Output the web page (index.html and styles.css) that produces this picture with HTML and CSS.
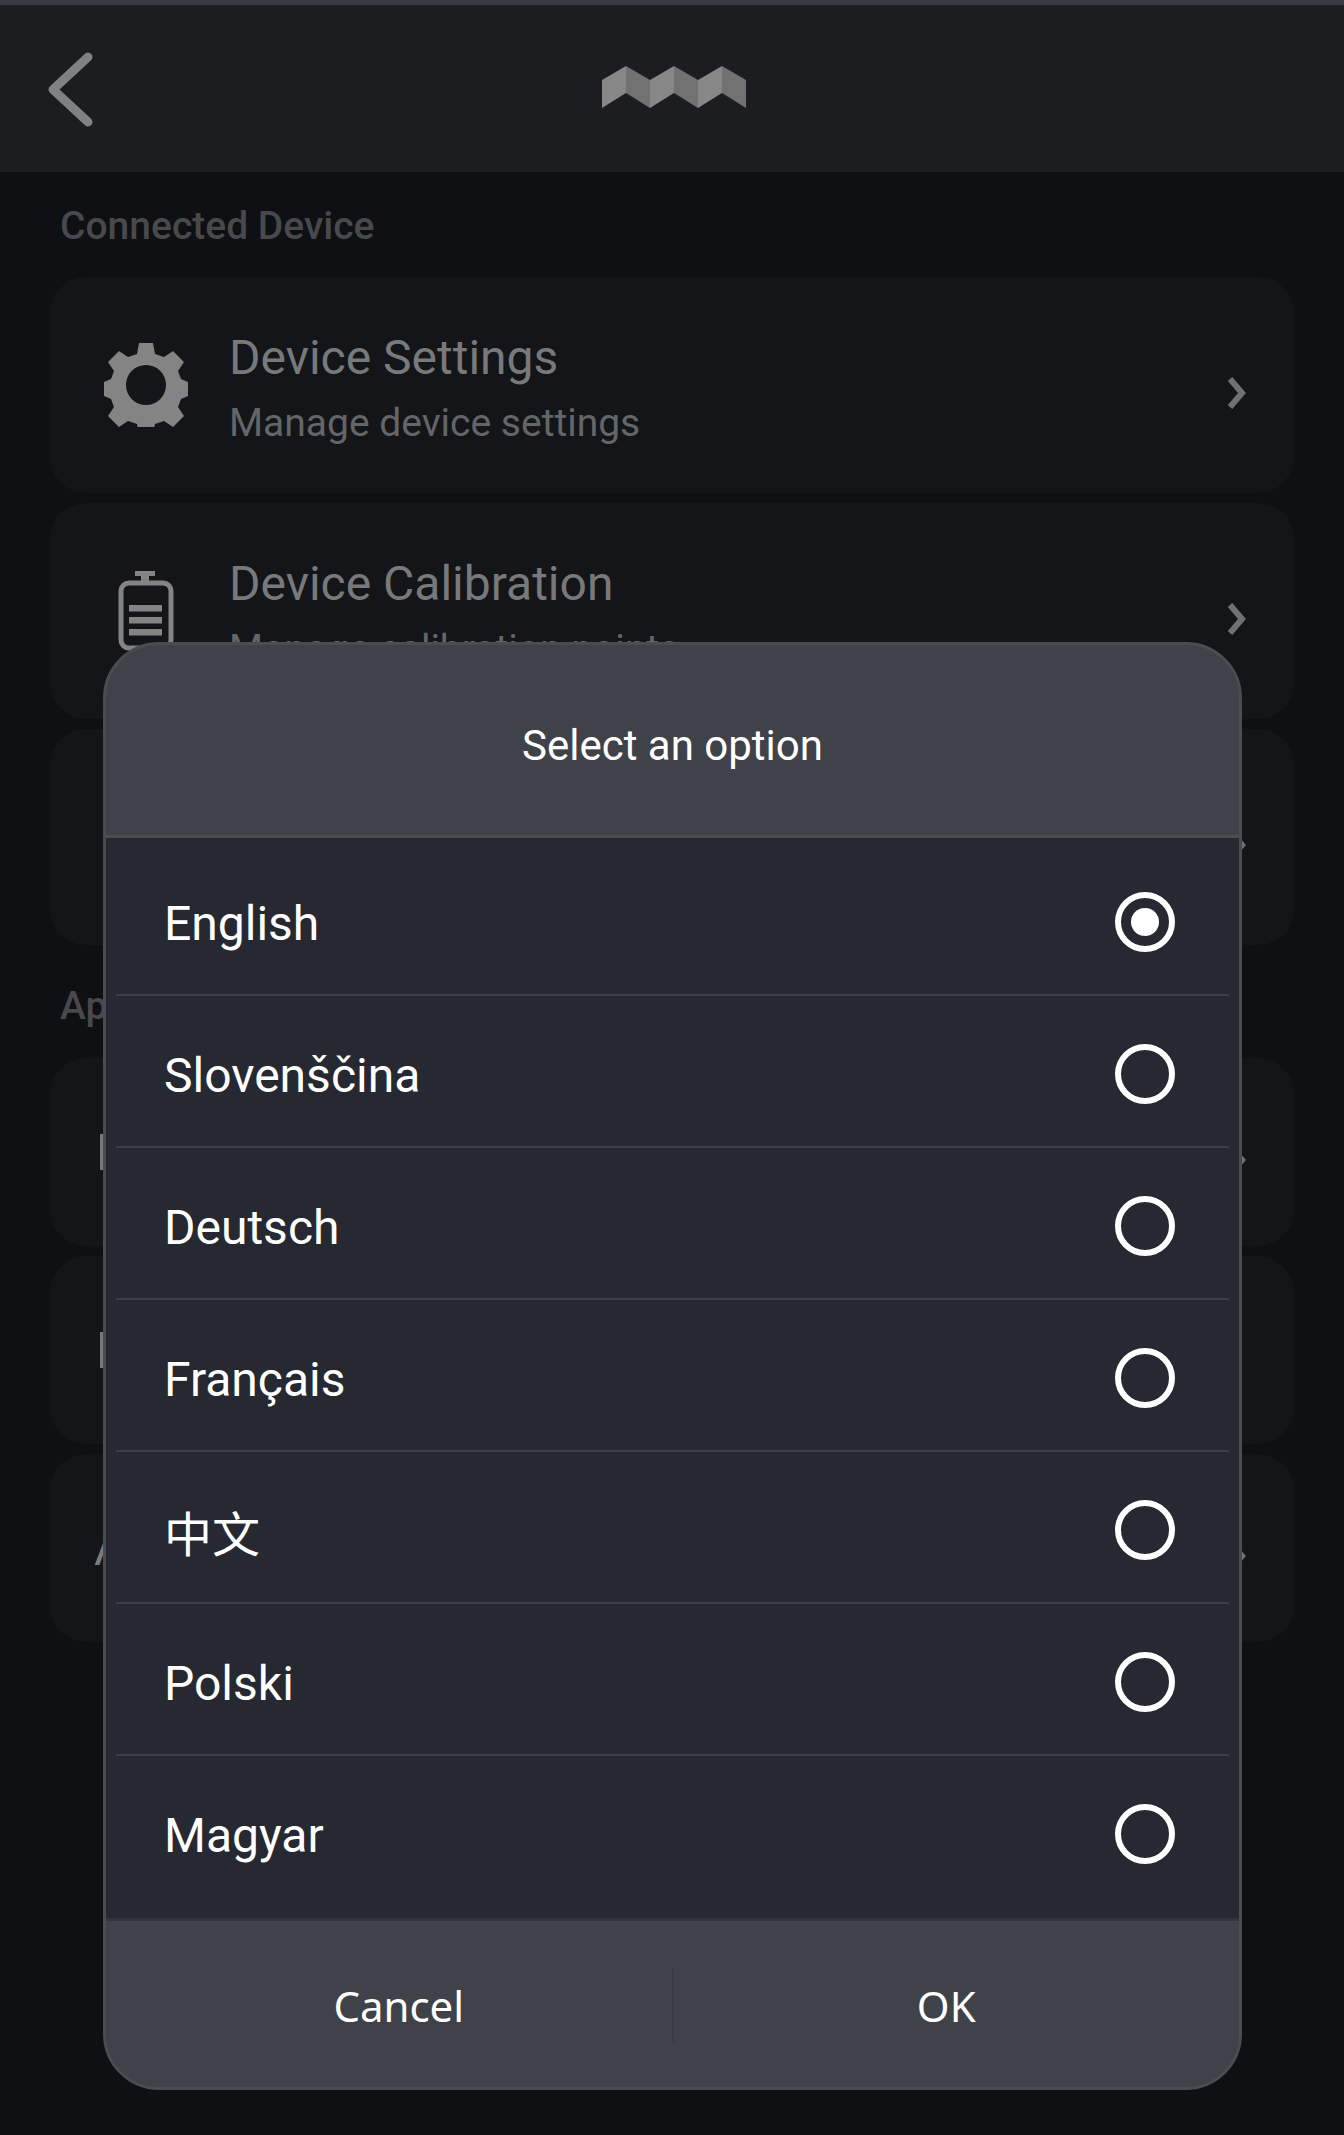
FILE: index.html
```html
<!DOCTYPE html>
<html lang="en">
<head>
<meta charset="utf-8">
<title>Select an option</title>
<link rel="stylesheet" href="styles.css">
</head>
<body>
<div class="page">
  <div class="status-strip"></div>
  <header class="topbar">
    <svg class="back" width="50" height="84" viewBox="0 0 50 84"><path d="M43 11 L8 43.5 L43 76" fill="none" stroke="#808182" stroke-width="9" stroke-linecap="round" stroke-linejoin="round"/></svg>
    <svg class="logo" width="146" height="44" viewBox="0 0 146 44">
      <polygon points="1,14 25,0 25,27 1,42" fill="#878787"/>
      <polygon points="25,0 49,14 49,42 25,27" fill="#727272"/>
      <polygon points="49,14 73,0 73,27 49,42" fill="#878787"/>
      <polygon points="73,0 97,14 97,42 73,27" fill="#727272"/>
      <polygon points="97,14 121,0 121,27 97,42" fill="#878787"/>
      <polygon points="121,0 145,14 145,42 121,27" fill="#727272"/>
    </svg>
  </header>
  <main class="content">
    <h2 class="section-label">Connected Device</h2>
    <div class="cards">
      <div class="card tall">
        <svg class="icon" width="84" height="84" viewBox="0 0 84 84"><path fill="#838483" fill-rule="evenodd" d="M35 0h14l2 11 9 3 9-6 11 11-6 9 3 8 7 3v14l-7 3-3 8 6 9-11 11-9-6-9 3-2 11H35l-2-11-9-3-9 6L4 73l6-9-3-8-7-3V39l7-3 3-8-6-9L15 8l9 6 9-3z M42 22a20 20 0 1 0 0 40a20 20 0 1 0 0-40z"/></svg>
        <div class="card-text">
          <div class="card-title">Device Settings</div>
          <div class="card-sub">Manage device settings</div>
        </div>
        <svg class="chev" width="18" height="32" viewBox="0 0 18 32"><path d="M2 2 L14 16 L2 30" fill="none" stroke="#707172" stroke-width="6"/></svg>
      </div>
      <div class="card tall">
        <svg class="icon" width="84" height="84" viewBox="0 0 84 84"><rect x="17" y="14" width="50" height="65" rx="8" fill="none" stroke="#838483" stroke-width="5"/><path fill="#838483" d="M31 2h20v5h-6v7h-8V7h-6z M25 36h33v6.500H25z M25 48h33v6.500H25z M25 60h33v6.500H25z"/></svg>
        <div class="card-text">
          <div class="card-title">Device Calibration</div>
          <div class="card-sub">Manage calibration points</div>
        </div>
        <svg class="chev" width="18" height="32" viewBox="0 0 18 32"><path d="M2 2 L14 16 L2 30" fill="none" stroke="#707172" stroke-width="6"/></svg>
      </div>
      <div class="card tall">
        <div class="icon-gap"></div>
        <div class="card-text"></div>
        <svg class="chev" width="18" height="32" viewBox="0 0 18 32"><path d="M2 2 L14 16 L2 30" fill="none" stroke="#707172" stroke-width="6"/></svg>
      </div>
    </div>
    <h2 class="section-label second">App Settings</h2>
    <div class="cards">
      <div class="card short">
        <div class="peek-bar"></div>
        <div class="card-text"></div>
        <svg class="chev" width="18" height="32" viewBox="0 0 18 32"><path d="M2 2 L14 16 L2 30" fill="none" stroke="#707172" stroke-width="6"/></svg>
      </div>
      <div class="card short">
        <div class="peek-bar"></div>
        <div class="card-text"></div>
      </div>
      <div class="card short">
        <div class="peek-a">A</div>
        <div class="card-text"></div>
        <svg class="chev" width="18" height="32" viewBox="0 0 18 32"><path d="M2 2 L14 16 L2 30" fill="none" stroke="#707172" stroke-width="6"/></svg>
      </div>
    </div>
  </main>

  <section class="dialog">
    <div class="dialog-title">Select an option</div>
    <ul class="options">
      <li class="option"><span class="option-name">English</span><span class="radio checked"></span></li>
      <li class="option"><span class="option-name">Slovenščina</span><span class="radio"></span></li>
      <li class="option"><span class="option-name">Deutsch</span><span class="radio"></span></li>
      <li class="option"><span class="option-name">Français</span><span class="radio"></span></li>
      <li class="option"><span class="option-name">中文</span><span class="radio"></span></li>
      <li class="option"><span class="option-name">Polski</span><span class="radio"></span></li>
      <li class="option"><span class="option-name">Magyar</span><span class="radio"></span></li>
    </ul>
    <div class="dialog-actions">
      <button class="action">Cancel</button>
      <span class="action-sep"></span>
      <button class="action">OK</button>
    </div>
  </section>
</div>
</body>
</html>
```

FILE: styles.css
```css
* { box-sizing: border-box; }
html, body { margin: 0; padding: 0; }
body { background: #0e1014; font-family: Roboto, "Noto Sans CJK SC", sans-serif; }
.page { position: relative; width: 1344px; height: 2135px; overflow: hidden; background: #0e1014; }
.status-strip { height: 5px; background: #383c42; }
.topbar { height: 167px; background: #1b1d20; display: flex; align-items: center; justify-content: center; position: relative; }
.back { position: absolute; left: 45px; top: 41px; }
.logo { display: block; margin: -1px 0 0 3px; }
.content { padding: 0 50px; }
.section-label { margin: 31px 0 0 10px; height: 46px; font-size: 39px; line-height: 46px; font-weight: 500; color: #48494c; white-space: nowrap; }
.section-label.second { margin-top: 38px; }
.cards { display: flex; flex-direction: column; gap: 10px; margin-top: 28px; }
.section-label.second + .cards { margin-top: 29px; }
.card { display: flex; align-items: center; background: #131519; border-radius: 36px; padding: 0 52px; }
.card.tall { height: 216px; }
.card.short { height: 188px; }
.icon { flex: none; margin: 0 41px 0 2px; }
.icon-gap { width: 128px; flex: none; }
.peek-bar { width: 50px; height: 36px; flex: none; margin-left: -2px; border-left: 3px solid #77787a; }
.peek-a { width: 50px; flex: none; font-size: 48px; color: #7a7b7c; margin-left: -8px; }
.card-text { flex: 1; min-width: 0; margin-top: 7px; }
.card-title { font-size: 48px; line-height: 56px; color: #77797b; white-space: nowrap; }
.card-sub { font-size: 39px; line-height: 48px; margin-top: 13px; color: #636568; white-space: nowrap; }
.chev { flex: none; margin-right: -4px; margin-top: 15px; }
.dialog { position: absolute; left: 103px; top: 642px; width: 1139px; height: 1448px; border: 3px solid #4a4c50; border-radius: 56px; background: #404249; display: flex; flex-direction: column; overflow: hidden; }
.dialog-title { height: 193px; padding-top: 10px; display: flex; align-items: center; justify-content: center; font-size: 42px; color: #ffffff; border-bottom: 3px solid #4a4c50; flex: none; }
.options { list-style: none; margin: 0; padding: 6px 10px 0; background: #262832; height: 1080px; flex: none; }
.option { height: 152px; padding: 8px 54px 0 48px; display: flex; align-items: center; justify-content: space-between; border-bottom: 2px solid #3d3f47; }
.option:last-child { border-bottom-color: transparent; }
.option-name { font-size: 48px; color: #ffffff; }
.radio { width: 60px; height: 60px; margin-top: -3px; border: 6px solid #ffffff; border-radius: 50%; display: flex; align-items: center; justify-content: center; }
.radio.checked::after { content: ""; width: 28px; height: 28px; border-radius: 50%; background: #ffffff; }
.dialog-actions { flex: 1; display: flex; align-items: center; padding: 2px 20px 0; border-top: 3px solid #33353c; }
.action { flex: 1; background: none; border: none; color: #ffffff; font-family: "Noto Sans", sans-serif; font-size: 42px; padding: 0; height: 74px; }
.action-sep { width: 2px; height: 74px; background: #393b42; flex: none; }
```
